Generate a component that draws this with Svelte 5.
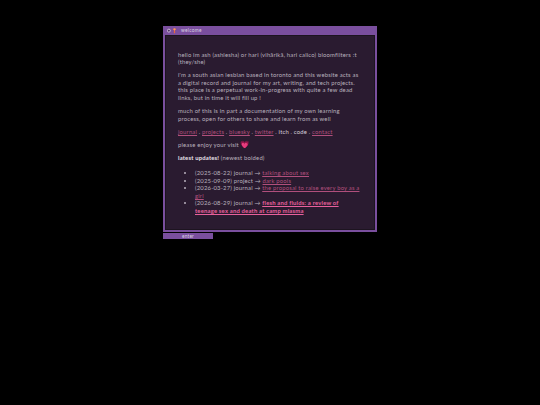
<script>
  const updates = [
    { date: '2025-08-22', kind: 'journal', title: 'talking about sex' },
    { date: '2025-09-09', kind: 'project', title: 'dark pools' },
    { date: '2026-03-27', kind: 'journal', title: 'the proposal to raise every boy as a girl' },
    { date: '2026-08-29', kind: 'journal', title: 'flesh and fluids: a review of teenage sex and death at camp miasma', fresh: true }
  ];
</script>

<div class="page">
  <div class="window">
    <div class="titlebar">
      <svg class="icon" viewBox="0 0 16 8" width="12" height="6">
        <circle cx="2.5" cy="3.5" r="2" fill="none" stroke="#d8d0d8" stroke-width="1" />
        <circle cx="2.5" cy="3.5" r="0.8" fill="#2a2030" />
        <path d="M8 1h4v1.5h-1.2V7H9.2V2.5H8z" fill="#e8683c" />
        <circle cx="10" cy="1.8" r="1.4" fill="#f29a70" />
      </svg>
      <span>welcome</span>
    </div>
    <div class="panel">
      <p>hello im ash (ashlesha) or hari (vihārikā, hari calico) bloomfilters :t (they/she)</p>
      <p>i'm a south asian lesbian based in toronto and this website acts as a digital record and journal for my art, writing, and tech projects. this place is a perpetual work-in-progress with quite a few dead links, but in time it will fill up !</p>
      <p>much of this is in part a documentation of my own learning process, open for others to share and learn from as well</p>
      <p>
        <a href="#j">journal</a> . <a href="#p">projects</a> . <a href="#b">bluesky</a> . <a href="#t">twitter</a> . <span class="plain">itch</span> . <span class="plain">code</span> . <a href="#c">contact</a>
      </p>
      <p class="visit">please enjoy your visit <span class="heart">💗</span></p>
      <p><b>latest updates!</b> (newest bolded)</p>
      <ul>
        {#each updates as u}
          <li>
            ({u.date}) {u.kind} → <a href="#u" class:fresh={u.fresh}>{u.title}</a>
          </li>
        {/each}
      </ul>
    </div>
  </div>
  <div class="enter">enter</div>
</div>

<style>
  :global(body) {
    background: #000;
  }

  .page {
    width: 214px;
    margin: 0 auto;
    padding-top: 26px;
    font-family: Lato, "Noto Sans", sans-serif;
    font-size: 5.9px;
    line-height: 7.6px;
    letter-spacing: 0.18px;
    color: #b9b1bd;
  }

  .window {
    background: #7a4f9e;
    padding: 1px;
  }

  .titlebar {
    display: flex;
    align-items: center;
    gap: 2px;
    height: 7px;
    padding: 0 3px;
    background: #7a4f9e;
    color: #d9cfe0;
    font-size: 4.8px;
    letter-spacing: 0.3px;
  }

  .icon {
    display: block;
  }

  .panel {
    border: 1px solid #7a4f9e;
    outline: 1px solid #1d1420;
    outline-offset: -2px;
    background: #2a1b30;
    padding: 15.5px 13px 15px;
  }

  p {
    margin: 0 0 5.5px;
  }

  .visit {
    margin-top: 6px;
  }

  b {
    color: #e8e2ea;
    font-weight: 700;
  }

  a {
    color: #b04f7c;
  }

  a.fresh {
    color: #e8609c;
    font-weight: 700;
  }

  .plain {
    color: #d5ced8;
  }

  .heart {
    font-family: "Noto Color Emoji", sans-serif;
    font-size: 7.5px;
    line-height: 1px;
    color: #f0789f;
  }

  ul {
    margin: 7px 0 0;
    padding: 0 0 0 17px;
  }

  .enter {
    width: 50px;
    height: 6.5px;
    margin-top: 1px;
    background: #7a4f9e;
    color: #d9cfe0;
    font-size: 4.8px;
    line-height: 6.5px;
    text-align: center;
  }
</style>
